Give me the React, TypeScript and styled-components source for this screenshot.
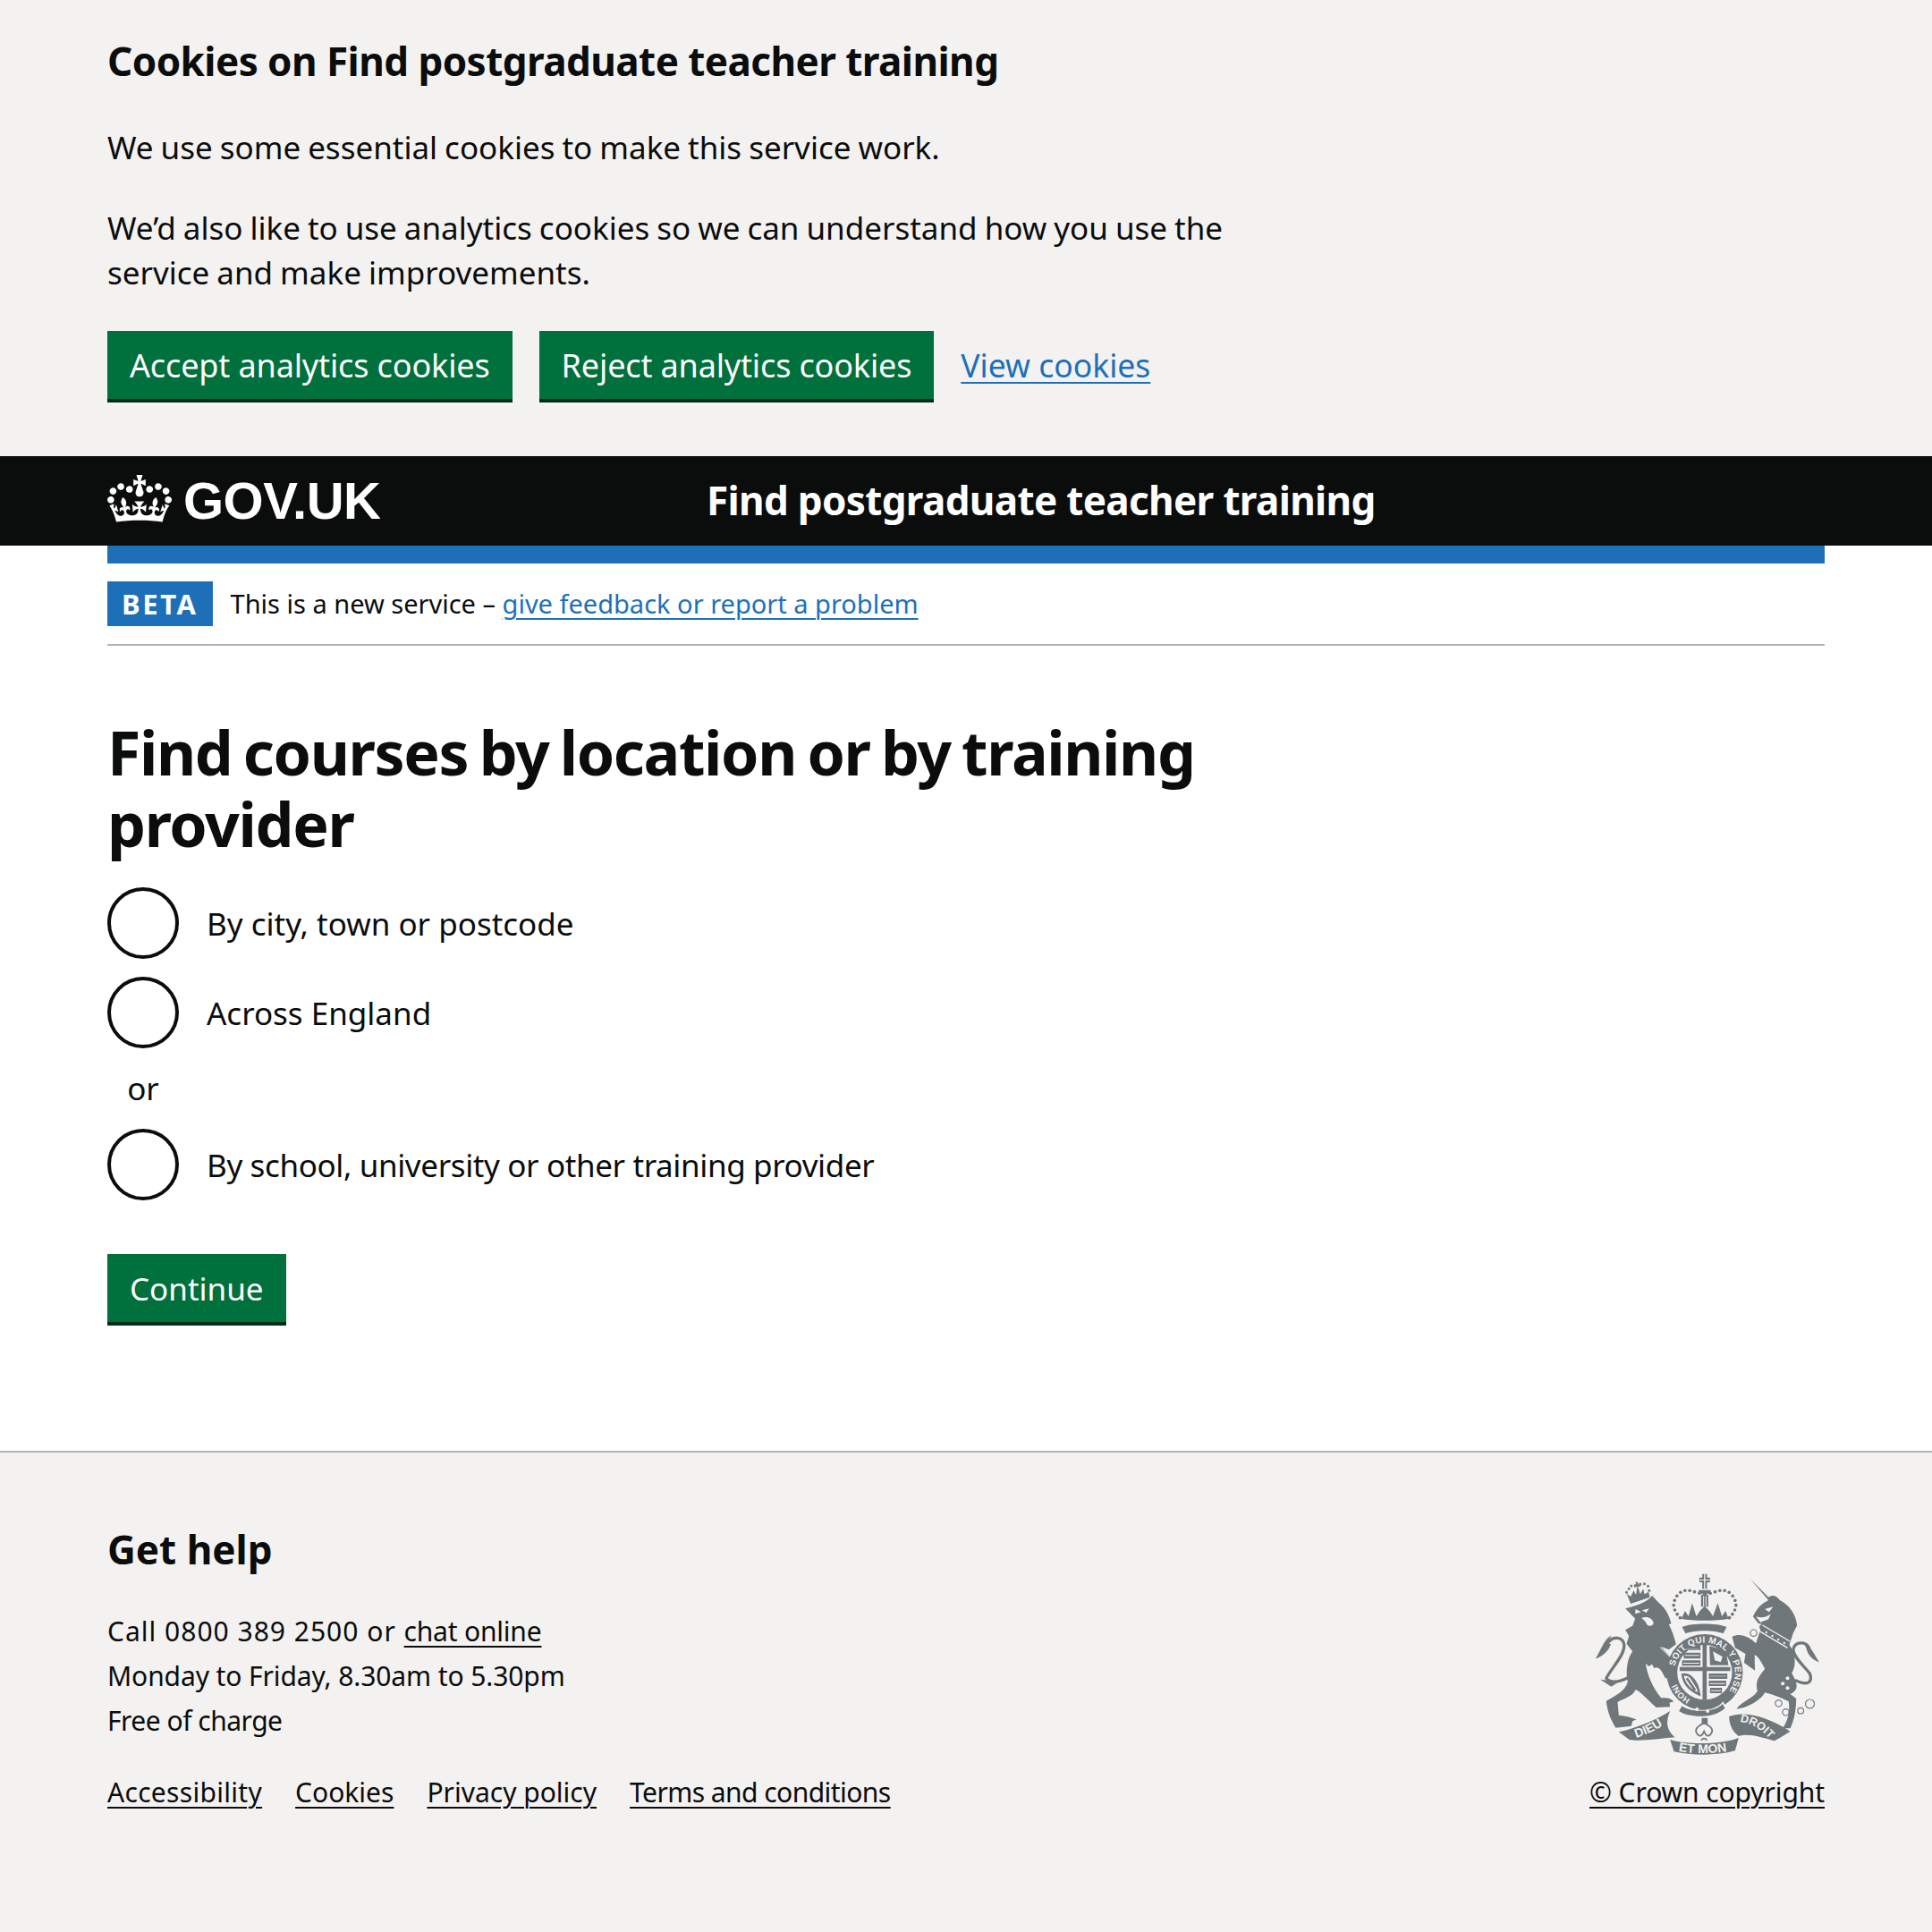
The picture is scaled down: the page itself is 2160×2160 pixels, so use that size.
import React from "react";
import styled, { createGlobalStyle } from "styled-components";

const FONT = `"Noto Sans", Roboto, Arial, sans-serif`;

const Global = createGlobalStyle`
  html, body { margin: 0; padding: 0; background: #fff; }
  body { font-family: ${FONT}; color: #0b0c0c; }
`;

const Page = styled.div`
  width: 2160px;
  min-height: 2160px;
  display: flex;
  flex-direction: column;
`;
const Width = styled.div`
  width: 1920px;
  margin: 0 auto;
`;
const CookieBanner = styled.section`
  background: #f3f2f1;
  padding: 38px 0 60px;
`;
const Heading = styled.h2`
  margin: 0 0 42px;
  font-size: 44px;
  line-height: 60px;
  font-weight: 700;
  letter-spacing: -0.55px;
`;
const Copy = styled.p`
  margin: 0 0 40px;
  max-width: 1270px;
  font-size: 35px;
  line-height: 50px;
  word-spacing: -1.1px;
`;
const Actions = styled.div`
  display: flex;
  align-items: center;
  gap: 30px;
`;
const Button = styled.button<{ $size?: number; $spacing?: number }>`
  border: 0;
  border-radius: 0;
  height: 80px;
  padding: 0 25px 3px;
  background: #00703c;
  box-shadow: inset 0 -4px 0 #002d18;
  color: #fff;
  font: 400 ${(p) => p.$size ?? 36}px/50px ${FONT};
  letter-spacing: ${(p) => p.$spacing ?? 0}px;
`;
const BlueLink = styled.a<{ $size?: number }>`
  color: #1d70b8;
  font-size: ${(p) => p.$size ?? 35.5}px;
  text-decoration: underline;
  text-decoration-thickness: 2px;
  text-underline-offset: 5px;
`;
const ActionLink = styled(BlueLink)`
  margin-bottom: 4px;
`;
const Header = styled.header`
  background: #0b0c0c;
  height: 100px;
  color: #fff;
`;
const HeaderRow = styled(Width)`
  height: 100px;
  display: flex;
  align-items: center;
`;
const Logo = styled.div`
  width: 670px;
  display: flex;
  align-items: center;
  gap: 13px;
`;
const LogoMark = styled.svg`
  width: 72px;
  height: 53px;
  margin-bottom: 6px;
`;
const LogoText = styled.span`
  font: 700 58px/1 "Liberation Sans", Arial, sans-serif;
  letter-spacing: -0.5px;
`;
const ServiceName = styled.span`
  font-size: 44px;
  line-height: 60px;
  padding-bottom: 2px;
  font-weight: 700;
  letter-spacing: -0.66px;
`;
const BlueBar = styled(Width)`
  height: 20px;
  background: #1d70b8;
`;
const PhaseBanner = styled(Width)`
  display: flex;
  align-items: center;
  gap: 20px;
  padding: 20px 0;
  border-bottom: 2px solid #b1b4b6;
`;
const Tag = styled.strong`
  background: #1d70b8;
  color: #fff;
  height: 50px;
  padding: 0 16px;
  display: flex;
  align-items: center;
  font-size: 31px;
  letter-spacing: 2.6px;
`;
const PhaseText = styled.span`
  font-size: 29px;
  line-height: 40px;
`;
const Main = styled(Width)`
  padding: 79px 0 140px;
`;
const Title = styled.h1`
  margin: 0 0 31px;
  max-width: 1270px;
  font-size: 68px;
  line-height: 80px;
  font-weight: 700;
  letter-spacing: -1.35px;
  word-spacing: -4px;
`;
const Radios = styled.div`
  display: flex;
  flex-direction: column;
  gap: 20px;
  margin-bottom: 60px;
`;
const RadioRow = styled.label<{ $spacing?: number }>`
  display: flex;
  align-items: center;
  gap: 31px;
  font-size: 35px;
  letter-spacing: ${(p) => p.$spacing ?? 0}px;
`;
const RadioInput = styled.input`
  appearance: none;
  margin: 0;
  width: 80px;
  height: 80px;
  border: 4px solid #0b0c0c;
  border-radius: 50%;
  background: #fff;
`;
const Divider = styled.div`
  width: 80px;
  text-align: center;
  font-size: 35px;
  line-height: 50px;
`;
const Footer = styled.footer`
  flex: 1;
  background: #f3f2f1;
  border-top: 2px solid #b1b4b6;
  padding: 78px 0 0;
`;
const FooterRow = styled(Width)`
  display: flex;
  justify-content: space-between;
  align-items: flex-end;
`;
const FooterHeading = styled.h2`
  margin: 0 0 37px;
  font-size: 44px;
  line-height: 60px;
  font-weight: 700;
`;
const FooterLine = styled.p<{ $spacing?: number }>`
  margin: 0;
  font-size: 30px;
  line-height: 50px;
  letter-spacing: ${(p) => p.$spacing ?? 0}px;
`;
const FooterLink = styled.a<{ $spacing?: number }>`
  color: #0b0c0c;
  font-size: 30px;
  letter-spacing: ${(p) => p.$spacing ?? 0}px;
  text-decoration: underline;
  text-decoration-thickness: 2px;
  text-underline-offset: 5px;
`;
const FooterLinks = styled.nav`
  display: flex;
  gap: 37px;
  line-height: 50px;
  margin-top: 30px;
`;
const CrestColumn = styled.div`
  display: flex;
  flex-direction: column;
  align-items: flex-end;
  gap: 16px;
  line-height: 50px;
`;
const CrestMark = styled.svg`
  width: 252px;
  height: 204px;
  margin-right: 5px;
`;

const Crown = () => (
  <LogoMark viewBox="0 0 132 97" aria-hidden="true">
    <path
      fill="#fff"
      fillRule="evenodd"
      d="M25 30.2c3.5 1.5 7.7-.2 9.1-3.7 1.5-3.6-.2-7.8-3.9-9.2-3.6-1.4-7.6.3-9.1 3.9-1.4 3.5.3 7.5 3.9 9zM9 39.5c3.6 1.5 7.8-.2 9.2-3.7 1.5-3.6-.2-7.8-3.9-9.1-3.6-1.5-7.6.2-9.1 3.8-1.4 3.5.3 7.5 3.8 9zM4.4 57.2c3.5 1.5 7.7-.2 9.1-3.8 1.5-3.6-.2-7.7-3.9-9.1-3.5-1.5-7.6.3-9.1 3.8-1.4 3.5.3 7.6 3.9 9.1zm38.3-21.4c3.5 1.5 7.7-.2 9.1-3.8 1.5-3.6-.2-7.7-3.9-9.1-3.6-1.5-7.6.3-9.1 3.8-1.3 3.6.4 7.7 3.9 9.1zm64.4-5.6c-3.6 1.5-7.8-.2-9.1-3.7-1.5-3.6.2-7.8 3.8-9.2 3.6-1.4 7.7.3 9.2 3.9 1.3 3.5-.4 7.5-3.9 9zm15.9 9.3c-3.6 1.5-7.7-.2-9.1-3.7-1.5-3.6.2-7.8 3.7-9.1 3.6-1.5 7.7.2 9.2 3.8 1.5 3.5-.3 7.5-3.8 9zm4.7 17.7c-3.6 1.5-7.8-.2-9.2-3.8-1.5-3.6.2-7.7 3.9-9.1 3.6-1.5 7.7.3 9.2 3.8 1.3 3.5-.4 7.6-3.9 9.1zM89.3 35.8c-3.6 1.5-7.8-.2-9.2-3.8-1.4-3.6.2-7.7 3.9-9.1 3.6-1.5 7.7.3 9.2 3.8 1.4 3.6-.3 7.7-3.9 9.1zM69.7 17.7l8.9 4.7V9.3l-8.9 2.8c-.2-.3-.5-.6-.9-.9L72.4 0H59.6l3.6 11.2c-.3.3-.6.5-.9.9l-8.8-2.8v13.1l8.8-4.7c.3.3.6.7.9.9l-5 15.4v.1c-.2.8-.4 1.6-.4 2.4 0 4.1 3.1 7.5 7 8.1h.2c.3 0 .7.1 1 .1.4 0 .7 0 1-.1h.2c4-.6 7.1-4.1 7.1-8.1 0-.8-.1-1.7-.4-2.4V34l-5.1-15.4c.4-.2.7-.6 1-.9zM66 92.8c16.9 0 32.8 1.1 47.1 3.2 4-16.9 8.9-26.7 14-33.5l-9.6-3.4c1 4.9 1.1 7.2 0 10.2-1.5-1.4-3-4.3-4.2-8.7L108.6 76c2.8-2 5-3.2 7.5-3.3-4.4 9.4-10 11.9-13.6 11.2-4.3-.8-6.3-4.6-5.6-7.9 1-4.7 5.7-5.9 8-.5 4.3-8.7-3-11.4-7.6-8.8 7.1-7.2 7.9-13.5 2.1-21.1-8 6.1-8.1 12.3-4.5 20.8-4.7-5.4-12.1-2.5-9.5 6.2 3.4-5.2 7.9-2 7.2 3.1-.6 4.3-6.4 7.8-13.5 7.2-10.3-.9-10.9-8-11.2-13.8 2.5-.5 7.1 1.8 11 7.3L80.2 60c-4.1 4.4-8 5.3-12.3 5.4 1.4-4.4 8-11.6 8-11.6H55.5s6.4 7.2 7.9 11.6c-4.2-.1-8-1-12.3-5.4l1.4 16.4c3.9-5.5 8.5-7.7 10.9-7.3-.3 5.8-.9 12.8-11.1 13.8-7.2.6-12.9-2.9-13.5-7.2-.7-5 3.8-8.3 7.1-3.1 2.7-8.7-4.6-11.6-9.4-6.2 3.7-8.5 3.6-14.7-4.6-20.8-5.8 7.6-5 13.9 2.2 21.1-4.7-2.6-11.9.1-7.7 8.8 2.3-5.5 7.1-4.2 8.1.5.7 3.3-1.3 7.1-5.7 7.9-3.5.7-9-1.8-13.5-11.2 2.5.1 4.7 1.3 7.5 3.3l-4.7-15.4c-1.2 4.4-2.7 7.2-4.3 8.7-1.1-3-.9-5.3 0-10.2l-9.5 3.4c5 6.9 9.9 16.7 14 33.5 14.8-2.1 30.8-3.2 47.7-3.2z"
    />
  </LogoMark>
);

const GREY = "#6f777b";
const BG = "#f3f2f1";
const PEARLS = [
  [437, 131], [420, 127], [404, 122], [388, 118], [372, 118], [357, 124], [345, 136], [337, 151], [334, 167], [338, 183], [346, 197], [356, 209],
  [440, 131], [457, 127], [473, 122], [489, 118], [505, 118], [520, 124], [532, 136], [540, 151], [543, 167], [539, 183], [531, 197], [521, 209],
];
const LION_PEARLS = [[176, 124], [184, 112], [192, 102], [222, 96], [236, 95], [248, 103], [252, 118]];
const COLLAR_DOTS = [[645, 258], [665, 270], [685, 282], [705, 294]];
const CHAIN = [[602, 260, 11], [592, 344, 12], [726, 369, 10], [686, 496, 11], [710, 526, 11], [760, 521, 10], [791, 498, 15]];

const Crest = () => (
  <CrestMark viewBox="70 60 755 612" aria-hidden="true" fontFamily="Liberation Sans, Arial, sans-serif">
    <defs>
      <path id="garterTop" d="M338 372 A102 102 0 1 1 514 462" />
      <path id="garterLeft" d="M390 482 A102 102 0 0 1 338 412" />
      <path id="dieu" d="M208 612 C245 600 280 585 312 558" />
      <path id="etmon" d="M350 656 C400 666 480 666 526 654" />
      <path id="droit" d="M556 558 C590 562 625 580 654 614" />
    </defs>
    <g fill={GREY}>
      <path d="M176 128 L190 138 L200 118 L208 132 L212 104 L203 108 L200 98 L208 96 L206 88 L214 90 L216 98 L224 96 L222 104 L214 104 L222 130 L232 112 L236 130 L250 122 L254 140 L190 162 Z" />
      {LION_PEARLS.map(([x, y]) => <circle key={`${x}-${y}`} cx={x} cy={y} r="4.5" />)}
      <path d="M172 178 C205 168 240 162 262 135 L285 160 C300 170 318 195 326 228 L318 232 C328 250 336 275 342 298 L318 316 L292 306 L332 350 C322 368 350 392 342 412 L306 412 L298 396 C290 380 280 372 268 378 L262 365 L250 372 L240 362 C245 400 265 445 292 478 C312 476 328 480 334 490 L320 494 L322 508 L276 510 C245 484 225 458 207 450 C195 475 165 480 146 492 L150 536 C172 538 195 544 210 550 L196 556 L192 572 L140 578 C125 555 110 520 108 488 C140 470 170 455 180 425 C172 390 178 345 196 322 L176 296 L184 270 L172 250 L196 236 L205 212 Z" />
      <path fill="none" stroke={GREY} strokeWidth="10" strokeLinecap="round" d="M185 408 C150 426 122 428 108 412 C122 382 170 335 168 300 C165 272 128 268 112 296" />
      <path d="M126 268 C100 280 90 320 72 346 C95 340 116 320 124 296 C112 300 110 290 126 268 Z" />
      <path d="M88 416 L125 440 L150 424 Z" />
      <path fill={BG} d="M206 180 L225 190 L205 196 Z M228 184 L252 178 L242 192 Z M226 210 C240 204 260 208 266 224 C268 236 250 240 244 232 C240 220 234 216 226 210 Z" />
      <path fill="none" stroke={BG} strokeWidth="3" d="M288 308 L332 350" />
      {/* unicorn */}
      <path d="M590 78 L652 140 C665 130 680 135 690 150 C722 165 745 200 748 235 L735 260 L722 300 C745 330 745 370 730 395 C745 420 760 450 725 465 L745 480 C745 510 740 550 725 580 L700 580 C715 555 725 530 720 490 C690 475 660 465 640 460 C630 480 600 500 570 510 L545 515 C560 490 600 480 615 455 C605 420 625 400 640 380 C625 350 610 330 605 335 L607 386 L570 360 L575 330 L540 310 L530 272 C560 258 590 275 610 295 L625 250 C620 240 620 235 630 230 L618 228 L600 205 C620 165 635 160 652 150 Z" />
      <path fill="none" stroke={GREY} strokeWidth="10" strokeLinecap="round" d="M745 420 C790 440 800 420 790 395 C770 370 735 340 735 315 C740 290 775 285 788 310" />
      <path d="M770 288 C795 305 810 340 822 358 C800 350 785 335 780 315 Z" />
      <path fill="none" stroke={BG} strokeWidth="4" d="M632 234 L724 288 M622 254 L716 310" />
      {COLLAR_DOTS.map(([x, y]) => <circle key={`${x}-${y}`} cx={x} cy={y} r="3.5" fill={BG} />)}
      <circle cx="716" cy="412" r="6" fill={BG} />
      <circle cx="700" cy="430" r="6" fill={BG} />
      <circle cx="716" cy="445" r="6" fill={BG} />
      <path fill={BG} d="M640 180 L668 172 L654 190 Z M610 205 C630 212 650 205 660 196 L652 214 L625 224 Z" />
      {CHAIN.map(([x, y, r]) => <circle key={`${x}-${y}`} cx={x} cy={y} r={r} fill="none" stroke={GREY} strokeWidth="3.5" />)}
      {/* royal crown */}
      <path d="M430 62 H446 V74 H456 V90 H446 V112 H430 V90 H420 V74 H430 Z" />
      <path fill={BG} d="M436 62 H440 V112 H436 Z M420 81 H456 V84 H420 Z" />
      <path d="M418 116 H458 V128 H418 Z M426 132 H450 V172 H426 Z" />
      <path fill={BG} d="M433 134 H436 V170 H433 Z M441 134 H444 V170 H441 Z" />
      {PEARLS.map(([x, y]) => <circle key={`${x}-${y}`} cx={x} cy={y} r="5.5" />)}
      <path d="M360 212 L372 186 L384 204 L396 160 L410 204 L422 186 L438 170 L454 186 L466 204 L482 160 L496 204 L508 186 L518 212 C480 220 395 220 360 212 Z" />
      <path d="M362 240 C395 226 480 226 512 240 L500 262 C470 250 405 250 374 262 Z" />
      {/* garter */}
      <circle cx="438" cy="392" r="128" />
      <circle cx="438" cy="392" r="92" fill={BG} />
      <path d="M354 374 H431 V298 H445 V374 H524 V388 H445 V484 H431 V388 H354 Z" />
      <path d="M364 308 L424 300 V318 H366 Z M368 326 H424 V346 H368 Z M362 352 H424 V370 H362 Z M454 304 L508 318 L518 368 H456 Z" />
      <path fill={BG} d="M368 314 H420 V316 H368 Z M372 334 H420 V337 H372 Z M366 360 H420 V363 H366 Z M466 322 L498 340 L492 358 L472 352 Z" />
      <path fill="none" stroke={GREY} strokeWidth="8" d="M364 400 C388 396 414 420 420 466 C388 452 368 430 364 400 Z M378 412 L406 452 M392 408 L416 446" />
      <path d="M452 396 H514 V414 H452 Z M452 420 H510 V438 H452 Z M456 444 H496 V462 H456 Z" />
      <path fill={BG} d="M456 404 H510 V406 H456 Z M456 428 H506 V431 H456 Z M460 452 H492 V455 H460 Z" />
      {/* motto */}
      <path d="M150 592 C205 580 270 555 322 522 C306 560 310 585 338 610 C280 615 220 625 185 618 Z" />
      <path d="M322 618 C380 635 490 635 552 612 L540 655 C480 672 400 672 335 658 Z" />
      <path d="M520 540 C570 520 650 540 725 590 L690 612 L672 622 C630 610 585 595 552 606 C530 590 520 565 520 540 Z" />
      <path fill={BG} d="M358 498 C380 525 470 530 500 490 L510 510 C470 550 385 548 348 520 Z" />
      <path d="M362 505 C385 526 470 530 498 498 L506 512 C470 548 385 545 352 522 Z" />
      <circle cx="412" cy="516" r="6" fill={BG} />
      <circle cx="448" cy="522" r="6" fill={BG} />
      <path d="M428 545 H448 V566 H428 Z" />
      <path fill="none" stroke={GREY} strokeWidth="5" d="M436 562 C418 572 404 580 410 594 C420 612 430 606 436 590 C442 606 452 612 462 594 C468 580 454 572 436 562 Z M426 620 C432 612 440 612 446 620" />
    </g>
    <g fill={BG} fontWeight="700">
      <text fontSize="30" letterSpacing="1"><textPath href="#garterTop">SOIT QUI MAL Y PENSE</textPath></text>
      <text fontSize="28"><textPath href="#garterLeft">HONI</textPath></text>
      <text fontSize="42"><textPath href="#dieu">DIEU</textPath></text>
      <text fontSize="42"><textPath href="#etmon">ET MON</textPath></text>
      <text fontSize="38"><textPath href="#droit">DROIT</textPath></text>
    </g>
  </CrestMark>
);

export default function App() {
  return (
    <Page>
      <Global />
      <CookieBanner>
        <Width>
          <Heading>Cookies on Find postgraduate teacher training</Heading>
          <Copy>We use some essential cookies to make this service work.</Copy>
          <Copy>We’d also like to use analytics cookies so we can understand how you use the service and make improvements.</Copy>
          <Actions>
            <Button $spacing={-0.13}>Accept analytics cookies</Button>
            <Button $spacing={-0.15}>Reject analytics cookies</Button>
            <ActionLink href="#">View cookies</ActionLink>
          </Actions>
        </Width>
      </CookieBanner>
      <Header>
        <HeaderRow>
          <Logo>
            <Crown />
            <LogoText>GOV.UK</LogoText>
          </Logo>
          <ServiceName>Find postgraduate teacher training</ServiceName>
        </HeaderRow>
      </Header>
      <BlueBar />
      <PhaseBanner>
        <Tag>BETA</Tag>
        <PhaseText>
          This is a new service – <BlueLink href="#" $size={29}>give feedback or report a problem</BlueLink>
        </PhaseText>
      </PhaseBanner>
      <Main>
        <Title>Find courses by location or by training provider</Title>
        <Radios>
          <RadioRow><RadioInput type="radio" name="find" />By city, town or postcode</RadioRow>
          <RadioRow><RadioInput type="radio" name="find" />Across England</RadioRow>
          <Divider>or</Divider>
          <RadioRow $spacing={-0.37}><RadioInput type="radio" name="find" />By school, university or other training provider</RadioRow>
        </Radios>
        <Button $size={35}>Continue</Button>
      </Main>
      <Footer>
        <FooterRow>
          <div>
            <FooterHeading>Get help</FooterHeading>
            <FooterLine $spacing={1}>Call 0800 389 2500 or <FooterLink href="#" $spacing={-0.2}>chat online</FooterLink></FooterLine>
            <FooterLine $spacing={-0.1}>Monday to Friday, 8.30am to 5.30pm</FooterLine>
            <FooterLine $spacing={-0.5}>Free of charge</FooterLine>
            <FooterLinks>
              <FooterLink href="#" $spacing={0.3}>Accessibility</FooterLink>
              <FooterLink href="#">Cookies</FooterLink>
              <FooterLink href="#">Privacy policy</FooterLink>
              <FooterLink href="#" $spacing={-0.55}>Terms and conditions</FooterLink>
            </FooterLinks>
          </div>
          <CrestColumn>
            <Crest />
            <FooterLink href="#" $spacing={-0.1}>© Crown copyright</FooterLink>
          </CrestColumn>
        </FooterRow>
      </Footer>
    </Page>
  );
}
